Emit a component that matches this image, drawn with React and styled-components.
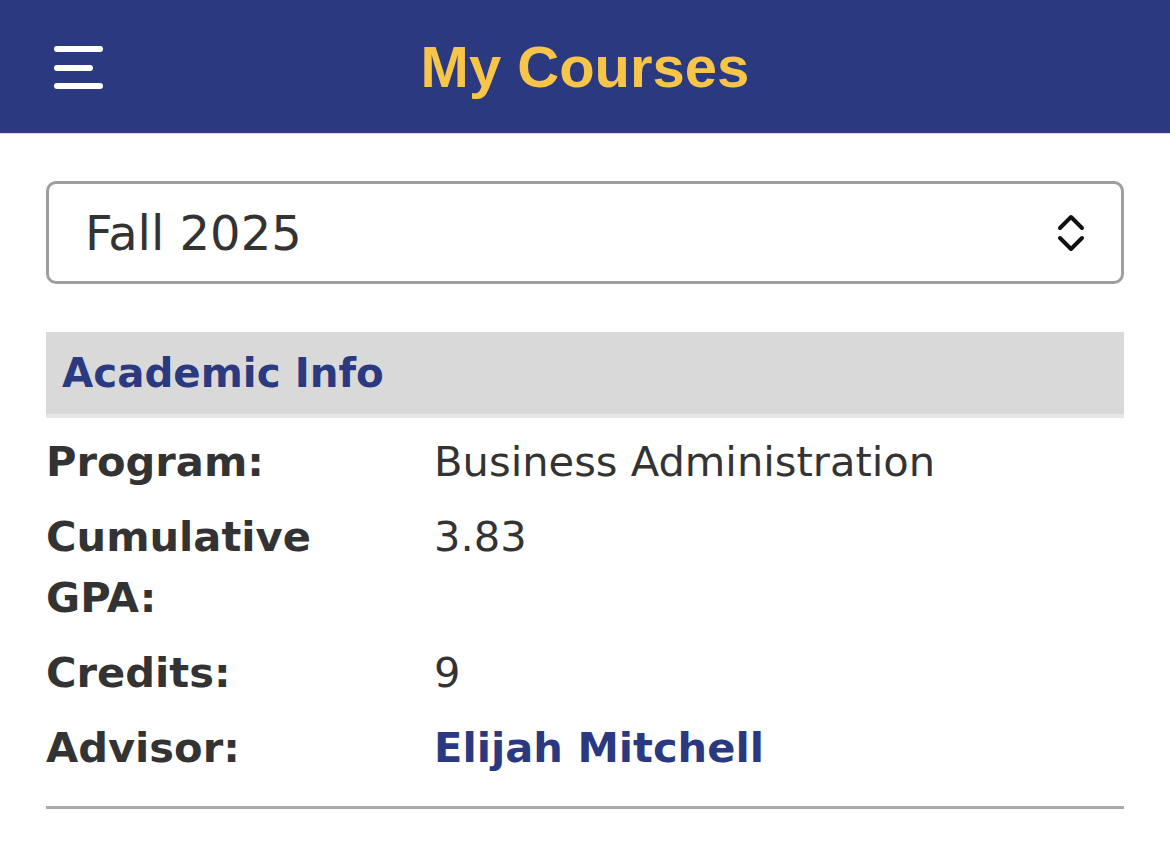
import React from 'react';
import styled, {createGlobalStyle} from 'styled-components';

const GlobalStyle = createGlobalStyle`
  html, body {
    margin: 0;
    padding: 0;
    background: #ffffff;
  }
  body {
    font-family: "DejaVu Sans", Verdana, sans-serif;
    color: #333333;
  }
`;

const info = [
    {label: 'Program:', value: 'Business Administration'},
    {label: 'Cumulative GPA:', value: '3.83'},
    {label: 'Credits:', value: '9'},
    {label: 'Advisor:', value: 'Elijah Mitchell', link: true},
];

const App = () => {
    return (
        <>
            <GlobalStyle/>
            <Header>
                <MenuButton aria-label="Menu">
                    <svg width="50" height="44" viewBox="0 0 50 44">
                        <g stroke="#ffffff" strokeWidth="6" strokeLinecap="round">
                            <line x1="3" y1="3" x2="46" y2="3"/>
                            <line x1="3" y1="22" x2="36" y2="22"/>
                            <line x1="3" y1="40" x2="46" y2="40"/>
                        </g>
                    </svg>
                </MenuButton>
                <Title>My Courses</Title>
            </Header>
            <Main>
                <TermSelect>
                    <span>Fall 2025</span>
                    <svg width="28" height="40" viewBox="0 0 28 40">
                        <g fill="none" stroke="#111111" strokeWidth="4" strokeLinecap="round" strokeLinejoin="round">
                            <polyline points="3,15 14,4 25,15"/>
                            <polyline points="3,25 14,36 25,25"/>
                        </g>
                    </svg>
                </TermSelect>
                <Section>
                    <SectionHead>Academic Info</SectionHead>
                    <InfoTable>
                        <tbody>
                        {info.map(row => (
                            <tr key={row.label}>
                                <Label>{row.label}</Label>
                                <Value $link={row.link}>{row.value}</Value>
                            </tr>
                        ))}
                        </tbody>
                    </InfoTable>
                </Section>
            </Main>
        </>
    )
}

const Header = styled.header`
  position: relative;
  height: 133px;
  background: #2b3a80;
  border-bottom: 1px solid #ebe2b2;
  display: flex;
  align-items: center;
  justify-content: center;
`;

const MenuButton = styled.div`
  position: absolute;
  left: 54px;
  top: 46px;
  display: flex;
  svg { display: block; }
`;

const Title = styled.h1`
  margin: 0;
  font-family: "Liberation Sans", Arial, sans-serif;
  font-weight: bold;
  font-size: 58px;
  color: #f6c54a;
  letter-spacing: 0;
`;

const Main = styled.main`
  padding: 47px 46px 0;
`;

const TermSelect = styled.div`
  box-sizing: border-box;
  height: 103px;
  border: 3px solid #9e9e9e;
  border-radius: 10px;
  display: flex;
  align-items: center;
  justify-content: space-between;
  padding: 0 36px 0 36px;
  font-size: 48px;
  color: #333333;
  svg { display: block; }
`;

const Section = styled.section`
  margin-top: 48px;
  border-bottom: 3px solid #aaaaaa;
  padding-bottom: 21px;
`;

const SectionHead = styled.h2`
  margin: 0;
  height: 82px;
  display: flex;
  align-items: center;
  padding-left: 16px;
  background: #d9d9d9;
  border-bottom: 4px solid #e6e6e6;
  font-size: 40.4px;
  font-weight: bold;
  color: #2b3a80;
`;

const InfoTable = styled.table`
  width: 100%;
  border-collapse: collapse;
  margin-top: 6px;
  font-size: 41.6px;
  line-height: 61px;
  td {
    padding: 7px 0;
    vertical-align: top;
  }
`;

const Label = styled.td`
  width: 36%;
  font-weight: bold;
  color: #333333;
  padding-right: 12px !important;
`;

const Value = styled.td`
  color: ${p => p.$link ? '#2b3a80' : '#333333'};
  font-weight: ${p => p.$link ? 'bold' : 'normal'};
`;

export default App;
